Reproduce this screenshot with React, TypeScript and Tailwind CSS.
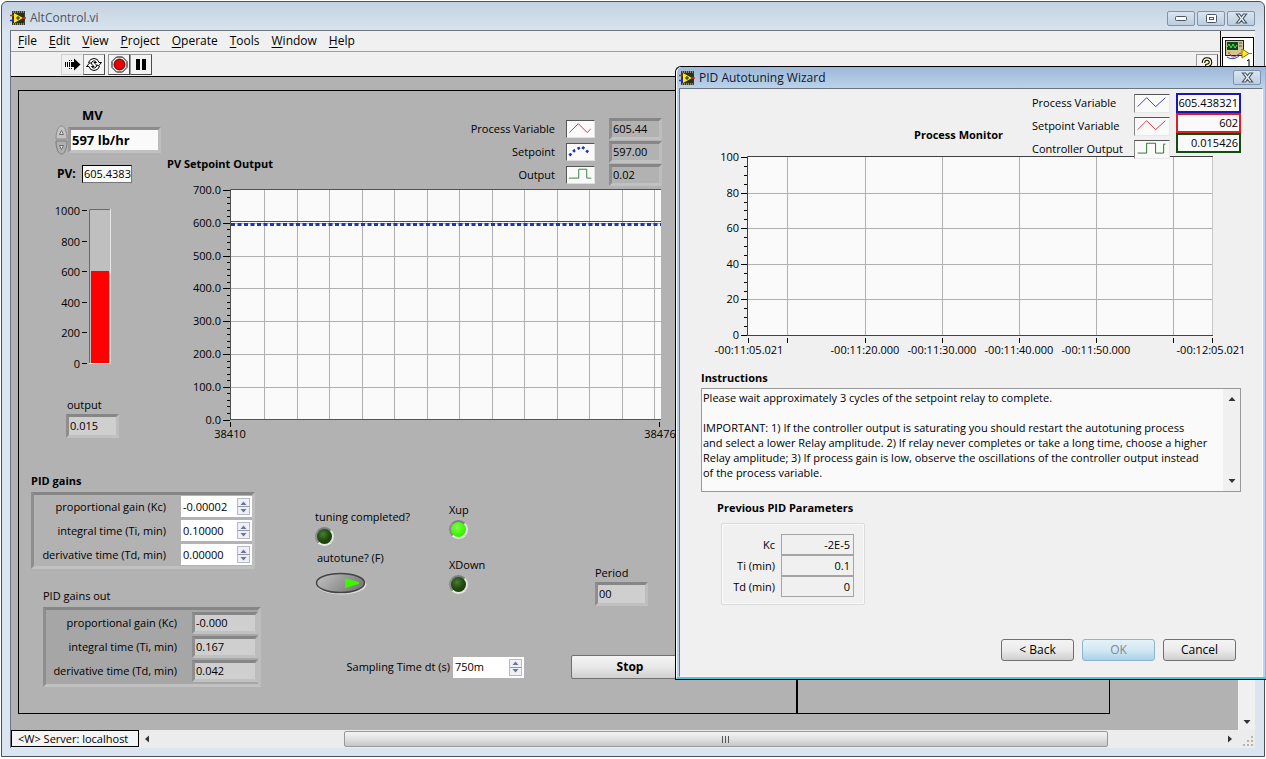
import React, { useState } from 'react';
import { clsx } from 'clsx';

const MENUS = ['File', 'Edit', 'View', 'Project', 'Operate', 'Tools', 'Window', 'Help'];

const INSTRUCTIONS = `Please wait approximately 3 cycles of the setpoint relay to complete.

IMPORTANT: 1) If the controller output is saturating you should restart the autotuning process
and select a lower Relay amplitude. 2) If relay never completes or take a long time, choose a higher
Relay amplitude; 3) If process gain is low, observe the oscillations of the controller output instead
of the process variable.`;

const SUNKEN = 'border-[3px] border-t-[#868686] border-l-[#8e8e8e] border-r-[#bdbdbd] border-b-[#c1c1c1]';

const range = (n: number) => Array.from({ length: n }, (_, i) => i);

const VIIcon = () => (
    <svg width="16" height="16" viewBox="0 0 16 16" className="shrink-0">
        <rect x="2" y="1" width="13" height="14" fill="#3a3a2c" />
        <path d="M3 2h11M3 14h11" stroke="#d8d2a0" strokeWidth="1" strokeDasharray="1 1" />
        <rect x="3" y="3" width="11" height="10" fill="#26331c" />
        <path d="M4 3v10l9-5z" fill="#ffe81a" />
        <path d="M6 8h4M8 6v4" stroke="#222" strokeWidth="1" />
        <path d="M0 5.500h4M12 8h4" stroke="#e02020" strokeWidth="1.500" />
        <path d="M0 10.500h4" stroke="#2030d0" strokeWidth="1.500" />
    </svg>
);

const CrossIcon = () => (
    <svg width="13" height="11" viewBox="0 0 13 11">
        <path d="M1.500 1h3l2 2.500 2-2.500h3l-3.400 4.500 3.400 4.500h-3l-2-2.500-2 2.500h-3l3.400-4.500z" fill="#f4f7fa" stroke="#4a5665" strokeWidth="1.200" />
    </svg>
);

const CaptionButton = ({ label, children }: { label: string; children: React.ReactNode }) => (
    <button
        aria-label={label}
        className="flex h-[15px] w-7 items-center justify-center rounded-[2px] border border-[#7f93aa] bg-linear-to-b from-[#dbe5f0] to-[#bccddf]"
    >
        {children}
    </button>
);

const ToolButton = ({ label, flat, children }: { label: string; flat?: boolean; children: React.ReactNode }) => (
    <button
        aria-label={label}
        className={clsx(
            'flex h-[21px] w-[22px] items-center justify-center border',
            flat
                ? 'border-[#d0d0d0] border-r-transparent bg-[#f0f0f0]'
                : 'border-t-[#9a9a9a] border-l-[#9a9a9a] border-r-[#4c4c4c] border-b-[#4c4c4c] bg-[#f4f4f4]',
        )}
    >
        {children}
    </button>
);

const Led = ({ on, label }: { on?: boolean; label: string }) => (
    <span
        role="img"
        aria-label={label}
        className={clsx(
            'block size-[19px] rounded-full border-2 border-t-[#7e7e7e] border-l-[#8c8c8c] border-r-[#e2e2e2] border-b-[#e8e8e8]',
            on
                ? 'bg-[radial-gradient(circle_at_40%_35%,#7dff4a,#3df500_60%,#2fd000)]'
                : 'bg-[radial-gradient(circle_at_40%_35%,#4a7a3a,#1e4a0c_50%,#123204)]',
        )}
    />
);

const Stepper = ({ label }: { label: string }) => (
    <span className="flex h-[17px] w-[13px] shrink-0 flex-col border border-[#b4bac8] bg-[#eef0f6]">
        <button aria-label={`Increase ${label}`} className="flex flex-1 items-center justify-center border-b border-[#8f96aa]">
            <svg width="7" height="4" viewBox="0 0 7 4"><path d="M0.500 4 3.500 0.500 6.500 4z" fill="#6c7697" /></svg>
        </button>
        <button aria-label={`Decrease ${label}`} className="flex flex-1 items-center justify-center">
            <svg width="7" height="4" viewBox="0 0 7 4"><path d="M0.500 0 3.500 3.500 6.500 0z" fill="#6c7697" /></svg>
        </button>
    </span>
);

const NumberField = ({ id, label, initial }: { id: string; label: string; initial: string }) => {
    const [value, setValue] = useState(initial);

    return (
        <span className="flex h-[21px] w-[71px] items-center bg-white pr-0.5 pl-0.5">
            <input id={id} value={value} onChange={(e) => setValue(e.target.value)} className="min-w-0 flex-1 bg-transparent outline-none" />
            <Stepper label={label} />
        </span>
    );
};

const Readout = ({ id, value, className }: { id?: string; value: string; className: string }) => (
    <output id={id} className={clsx('block truncate px-px', SUNKEN, className)}>
        {value}
    </output>
);

const MvControl = () => {
    const [mv, setMv] = useState('597 lb/hr');

    return (
        <div className="mt-0.5 ml-9 flex items-center">
            <div className="flex w-[13px] flex-col">
                <button aria-label="Increase MV" className="h-[15px]">
                    <svg width="13" height="15" viewBox="0 0 13 15">
                        <path d="M1 14C1 5 4 1 6.500 1S12 5 12 14z" fill="#c4c4c4" stroke="#8a8a8a" />
                        <path d="M4.500 9.500 6.500 5.500 8.500 9.500z" fill="#e4e4e4" stroke="#555" strokeWidth="0.800" />
                    </svg>
                </button>
                <button aria-label="Decrease MV" className="h-[15px]">
                    <svg width="13" height="15" viewBox="0 0 13 15">
                        <path d="M1 1C1 10 4 14 6.500 14S12 10 12 1z" fill="#b0b0b0" stroke="#7a7a7a" />
                        <path d="M4.500 5.500 6.500 9.500 8.500 5.500z" fill="#e4e4e4" stroke="#555" strokeWidth="0.800" />
                    </svg>
                </button>
            </div>
            <input
                id="mv"
                value={mv}
                onChange={(e) => setMv(e.target.value)}
                className="h-[26px] w-[93px] border-[3px] border-t-[#8c8c8c] border-l-[#9a9a9a] border-r-[#bdbdbd] border-b-[#c1c1c1] bg-[#fafafa] px-px text-[13px] font-bold outline-none"
            />
        </div>
    );
};

// Vertical tank, 0 to 1000
const Tank = () => (
    <svg width="66" height="169" viewBox="0 0 66 169" className="ml-[31px] mt-5 block text-[11px]" role="img" aria-label="PV level">
        {range(6).map((i) => (
            <g key={i}>
                <text x="30" y={12 + i * 30.6} textAnchor="end">{1000 - i * 200}</text>
                <path d={`M32 ${Math.round(8 + i * 30.6) - 0.5}h5`} stroke="#000" />
            </g>
        ))}
        <rect x="39.5" y="6.5" width="21" height="154" fill="#bfbfbf" stroke="#e6e6e6" />
        <path d="M39.500 160V6.500H60" stroke="#6a6a6a" fill="none" />
        <rect x="41" y="68" width="18" height="92" fill="#f00" />
    </svg>
);

const TrendChart = () => (
    <svg width="509" height="258" viewBox="0 0 509 258" className="block overflow-visible text-[11px]" role="img" aria-label="PV Setpoint Output chart">
        <rect x="64" y="4" width="430" height="230" fill="#fafafa" />
        {range(13).map((i) => (
            <path key={i} d={`M${Math.round(97 + i * 32.5) + 0.5} 4v229`} stroke="#b0b0b0" />
        ))}
        {range(8).map((i) => (
            <g key={i}>
                <text x="54" y={Math.round(8 + i * 32.800)} textAnchor="end">{`${(7 - i) * 100}.0`}</text>
                <path d={`M56 ${Math.round(4 + i * 32.800) + 0.5}h7`} stroke="#000" />
                {i > 0 && i < 7 && <path d={`M64 ${Math.round(4 + i * 32.800) + 0.5}h430`} stroke="#b0b0b0" />}
                {i < 7 && range(4).map((j) => (
                    <path key={j} d={`M60 ${Math.round(4 + i * 32.800 + (j + 1) * 6.560) + 0.5}h3`} stroke="#000" />
                ))}
            </g>
        ))}
        <path d="M63.500 234V3.500H494" stroke="#505050" fill="none" />
        <path d="M64 35.500h430" stroke="#c4142c" />
        <path d="M64 38.500h430" stroke="#1c37b4" strokeWidth="3" strokeDasharray="4 2.500" />
        <path d="M64 233.500h430" stroke="#1b7a2b" />
        <path d="M63.500 236v5M492.500 236v5" stroke="#000" />
        <text x="63" y="252" textAnchor="middle">38410</text>
        <text x="493" y="252" textAnchor="middle">38476</text>
    </svg>
);

const MonitorChart = () => (
    <svg width="560" height="216" viewBox="0 0 560 216" className="block overflow-visible text-[11px]" role="img" aria-label="Process Monitor chart">
        <rect x="59" y="6" width="465" height="179" fill="#fafafa" />
        {[98, 176, 253, 330, 407, 484].map((x) => (
            <path key={x} d={`M${x + 0.5} 6v178`} stroke="#b0b0b0" />
        ))}
        {range(6).map((i) => (
            <g key={i}>
                <text x="50" y={Math.round(10 + i * 35.600)} textAnchor="end">{100 - i * 20}</text>
                <path d={`M52 ${Math.round(6 + i * 35.600) + 0.5}h6`} stroke="#000" />
                {i > 0 && i < 5 && <path d={`M59 ${Math.round(6 + i * 35.600) + 0.5}h465`} stroke="#b0b0b0" />}
                {i < 5 && range(3).map((j) => (
                    <path key={j} d={`M55 ${Math.round(6 + i * 35.600 + (j + 1) * 8.900) + 0.5}h3`} stroke="#000" />
                ))}
            </g>
        ))}
        <path d="M58.500 185V5.500H524" stroke="#404040" fill="none" />
        <path d="M523.500 6v178" stroke="#c8c8c8" />
        <path d="M59 184.500h465" stroke="#1b5f1b" />
        {[59, 98, 176, 253, 330, 407, 484, 523].map((x) => (
            <path key={x} d={`M${x + 0.5} 187v5`} stroke="#000" />
        ))}
        {[
            [60, '-00:11:05.021'],
            [176, '-00:11:20.000'],
            [253, '-00:11:30.000'],
            [330, '-00:11:40.000'],
            [407, '-00:11:50.000'],
            [522, '-00:12:05.021'],
        ].map(([x, text]) => (
            <text key={text} x={x} y="203" textAnchor="middle">{text}</text>
        ))}
    </svg>
);

const TREND_LEGEND = [
    { label: 'Process Variable', value: '605.44', plot: <path d="M2 13 12 3l10 10 4-4" stroke="#c02434" fill="none" /> },
    { label: 'Setpoint', value: '597.00', plot: <path d="M2 13 8 7l8-4 9 8" stroke="#1c37b4" strokeWidth="3" strokeDasharray="3 3" fill="none" /> },
    { label: 'Output', value: '0.02', plot: <path d="M1.500 12.500h11v-10h9v10h5" stroke="#1b7a2b" fill="none" /> },
];

const MONITOR_LEGEND = [
    { label: 'Process Variable', value: '605.438321', box: 'border-[#1818b4]', plot: <path d="M2 13 12 3l10 10L33 3" stroke="#2a2ac8" fill="none" /> },
    { label: 'Setpoint Variable', value: '602', box: 'border-[#d82028]', plot: <path d="M2 13 12 3l10 10L33 3" stroke="#d82838" fill="none" /> },
    { label: 'Controller Output', value: '0.015426', box: 'border-[#104e10]', plot: <path d="M2 13.500h10v-11h10v11h9v-10h2" stroke="#1b6a1b" fill="none" /> },
];

const GAINS = [
    { id: 'kc', label: 'proportional gain (Kc)', value: '-0.00002', out: '-0.000' },
    { id: 'ti', label: 'integral time (Ti, min)', value: '0.10000', out: '0.167' },
    { id: 'td', label: 'derivative time (Td, min)', value: '0.00000', out: '0.042' },
];

const FrontPanel = () => {
    const [autotune, setAutotune] = useState(true);

    return (
        <div className="flex min-h-0 flex-1 bg-[#b2b2b2] pt-[13px] pr-32 pb-4 pl-[7px]">
            <section className="flex min-w-0 flex-[5_1_0%] flex-col border border-black">
                <div className="flex pt-4">
                    <div className="w-[148px] shrink-0">
                        <label htmlFor="mv" className="ml-[63px] block text-[13px] leading-4 font-bold">MV</label>
                        <MvControl />
                        <div className="mt-2.5 ml-[38px] flex h-[18px] items-center">
                            <label htmlFor="pv" className="w-[25px] text-xs font-bold">PV:</label>
                            <output id="pv" className="block h-[18px] w-[50px] border border-t-black border-l-black border-r-[#777] border-b-[#777] bg-[#fafafa] px-px leading-4">
                                605.4383
                            </output>
                        </div>
                        <Tank />
                        <label htmlFor="output" className="mt-[25px] ml-12 block">output</label>
                        <Readout id="output" value="0.015" className="mt-px ml-[47px] h-6 w-[53px] bg-[#cfcfcf] leading-[18px]" />
                    </div>
                    <div className="w-[509px] shrink-0">
                        <div className="mt-2.5 flex w-[495px] items-end justify-between">
                            <h2 className="pb-3.5 font-bold">PV Setpoint Output</h2>
                            <div>
                                {TREND_LEGEND.map((row) => (
                                    <div key={row.label} className="flex h-[23px] items-center justify-end">
                                        <span>{row.label}</span>
                                        <svg width="29" height="18" viewBox="0 0 29 18" className="mr-3.5 ml-[11px] border border-[#e0e0e0] border-t-[#555] border-l-[#555] bg-[#fafafa]">
                                            {row.plot}
                                        </svg>
                                        <Readout value={row.value} className="h-[22px] w-[53px] leading-4" />
                                    </div>
                                ))}
                            </div>
                        </div>
                        <TrendChart />
                    </div>
                </div>

                <div className="flex">
                    <div className="w-[296px] shrink-0 pt-[29px] pl-3">
                        <h2 className="font-bold">PID gains</h2>
                        <div className={clsx('mt-[3px] flex w-[224px] flex-col gap-[3px] py-px', SUNKEN)}>
                            {GAINS.map((g) => (
                                <div key={g.id} className="flex items-center justify-end">
                                    <label htmlFor={g.id} className="mr-[15px]">{g.label}</label>
                                    <NumberField id={g.id} label={g.label} initial={g.value} />
                                </div>
                            ))}
                        </div>
                        <h2 className="mt-[19px] pl-3">PID gains out</h2>
                        <div className={clsx('mt-[3px] ml-3 flex w-[218px] flex-col gap-0.5 bg-[#a6a6a6] py-0.5', SUNKEN)}>
                            {GAINS.map((g) => (
                                <div key={g.id} className="flex items-center justify-end">
                                    <label htmlFor={`${g.id}-out`} className="mr-[15px]">{g.label}</label>
                                    <Readout id={`${g.id}-out`} value={g.out} className="h-[22px] w-[66px] bg-[#cfcfcf] leading-4" />
                                </div>
                            ))}
                        </div>
                    </div>

                    <div className="min-w-0 flex-1">
                        <div className="flex">
                            <div className="w-[134px] shrink-0 pt-[65px]">
                                <p>tuning completed?</p>
                                <div className="pt-0.5"><Led label="tuning completed?" /></div>
                                <p className="mt-1 pl-0.5">autotune? (F)</p>
                                <button
                                    aria-label="autotune? (F)"
                                    aria-pressed={autotune}
                                    onClick={() => setAutotune(!autotune)}
                                    className="mt-1.5 block"
                                >
                                    <svg width="52" height="23" viewBox="0 0 52 23">
                                        <defs>
                                            <linearGradient id="knob" x1="0" x2="1" y1="0" y2="0.400">
                                                <stop offset="0" stopColor="#c4c4c4" />
                                                <stop offset="1" stopColor="#7c7c7c" />
                                            </linearGradient>
                                        </defs>
                                        <ellipse cx="26.500" cy="12.500" rx="25" ry="10" fill="#dcdcdc" />
                                        <ellipse cx="25.500" cy="11" rx="24" ry="9.500" fill="url(#knob)" stroke="#444" strokeWidth="1.500" />
                                        <path d="M30 6v10l14-4v-2z" fill={autotune ? '#3df500' : '#1e4a0c'} />
                                    </svg>
                                </button>
                            </div>
                            <div className="w-[146px] shrink-0 pt-[58px]">
                                <p>Xup</p>
                                <div className="pt-0.5"><Led on label="Xup" /></div>
                                <p className="mt-[18px]">XDown</p>
                                <div className="pt-0.5"><Led label="XDown" /></div>
                            </div>
                            <div className="pt-[121px]">
                                <label htmlFor="period" className="block">Period</label>
                                <Readout id="period" value="00" className="mt-px h-6 w-[53px] bg-[#cfcfcf] leading-[18px]" />
                            </div>
                        </div>
                        <div className="mt-[49px] flex items-center">
                            <label htmlFor="dt" className="w-[135px] text-right">Sampling Time dt (s)</label>
                            <div className="ml-[3px] w-[118px] shrink-0"><NumberField id="dt" label="sampling time" initial="750m" /></div>
                            <button className="h-6 w-[118px] rounded-[2px] border border-[#707070] bg-linear-to-b from-[#f4f4f4] via-[#e8e8e8] to-[#cfcfcf] text-xs font-bold">
                                Stop
                            </button>
                        </div>
                    </div>
                </div>
            </section>
            <section className="flex-[2_1_0%] border border-black" />
        </div>
    );
};

const Arrow = ({ d }: { d: string }) => (
    <svg width="8" height="8" viewBox="0 0 8 8"><path d={d} fill="#333" /></svg>
);

const HorizontalScroll = () => (
    <div className="flex h-[18px] shrink-0 bg-[#ececec]">
        <div className="flex h-[17px] w-32 shrink-0 items-center border border-black bg-[#f4f4f4] pl-1.5 whitespace-nowrap">&lt;W&gt; Server: localhost</div>
        <button aria-label="Scroll left" className="flex w-[205px] items-center pl-1"><Arrow d="M6 0.500v7L2 4z" /></button>
        <div className="mt-px flex h-4 flex-1 items-center justify-center rounded-[2px] border border-[#979797] bg-linear-to-b from-[#f3f3f3] via-[#e0e0e0] to-[#c6c6c6]">
            <svg width="8" height="7" viewBox="0 0 8 7"><path d="M0.500 0v7M3.500 0v7M6.500 0v7" stroke="#555" /></svg>
        </div>
        <button aria-label="Scroll right" className="flex w-[130px] items-center justify-end pr-1"><Arrow d="M2 0.500v7L6 4z" /></button>
        <div className="flex w-[17px] items-end justify-end p-0.5">
            <svg width="10" height="10" viewBox="0 0 10 10" fill="#b5b5ac">
                <path d="M8 0h2v2H8zM4 4h2v2H4zM8 4h2v2H8zM0 8h2v2H0zM4 8h2v2H4zM8 8h2v2H8z" />
            </svg>
        </div>
    </div>
);

const WizardButton = ({ children, disabled }: { children: React.ReactNode; disabled?: boolean }) => (
    <button
        disabled={disabled}
        className={clsx(
            'h-[22px] w-[73px] rounded-[3px] border bg-linear-to-b text-xs leading-4',
            disabled
                ? 'border-[#8eb4c8] from-[#e4f2f9] via-[#d2e8f3] to-[#a8d3e8] text-[#7f8a90]'
                : 'border-[#707070] from-[#f4f4f4] via-[#ebebeb] to-[#cfcfcf] text-black',
        )}
    >
        {children}
    </button>
);

const AutotuningWizard = () => (
    <div
        role="dialog"
        aria-label="PID Autotuning Wizard"
        className="absolute top-[66px] right-0 flex h-[614px] w-[591px] flex-col rounded-tl-md border-t border-b border-l border-black bg-[#b9d1ea]"
    >
        <div className="flex min-h-0 flex-1 flex-col rounded-tl-md border-b-2 border-l border-r border-b-[#4fc3d9] border-l-white border-r-[#5fc9e6] bg-linear-to-b from-[#9db8d8] to-[#bdd3ea] to-[22px] pr-0.5 pl-0.5">
            <header className="flex h-[21px] shrink-0 items-center pr-0.5">
                <VIIcon />
                <h1 className="ml-1 flex-1 text-xs text-[#101828]">PID Autotuning Wizard</h1>
                <CaptionButton label="Close wizard"><CrossIcon /></CaptionButton>
            </header>
            <div className="flex min-h-0 flex-1 flex-col border border-t-[#6d7580] border-l-[#6d7580] border-r-[#f8f8f8] border-b-[#f8f8f8] bg-[#f0f0f0] pr-[21px] pl-[9px]">
                <div className="flex h-[62px] items-start justify-end pt-[3px]">
                    <h2 className="mr-[29px] pt-[35px] font-bold">Process Monitor</h2>
                    <div className="w-[102px]">
                        {MONITOR_LEGEND.map((row) => (
                            <p key={row.label} className="h-[23px] pt-[3px]">{row.label}</p>
                        ))}
                    </div>
                    <div className="z-10 mr-1.5 flex flex-col gap-1 pt-0.5">
                        {MONITOR_LEGEND.map((row) => (
                            <svg key={row.label} width="36" height="19" viewBox="0 0 36 19" className="border border-[#e8e8e8] border-t-[#555] border-l-[#888] bg-[#fafafa]">
                                {row.plot}
                            </svg>
                        ))}
                    </div>
                    <div className="flex flex-col pt-px">
                        {MONITOR_LEGEND.map((row) => (
                            <output key={row.label} className={clsx('flex h-5 w-[65px] items-center justify-end border-2 bg-[#fafafa] pr-px', row.box)}>
                                {row.value}
                            </output>
                        ))}
                    </div>
                </div>
                <MonitorChart />
                <div className="pl-3">
                    <label htmlFor="instructions" className="mt-[3px] block font-bold">Instructions</label>
                    <div className="mt-0.5 flex h-[104px] border border-[#999] bg-[#fafafa]">
                        <textarea
                            id="instructions"
                            readOnly
                            defaultValue={INSTRUCTIONS}
                            className="block min-w-0 flex-1 resize-none overflow-hidden py-px pl-px leading-[15px] whitespace-pre outline-none"
                        />
                        <div className="flex w-[17px] flex-col items-center justify-between bg-[#f0f0f0] py-1.5">
                            <button aria-label="Scroll up"><Arrow d="M0.500 6h7L4 2z" /></button>
                            <button aria-label="Scroll down"><Arrow d="M0.500 2h7L4 6z" /></button>
                        </div>
                    </div>
                    <h2 className="mt-2 pl-4 font-bold">Previous PID Parameters</h2>
                    <div className="mt-[7px] ml-5 w-36 rounded-[2px] border border-[#dcdcdc] pt-2.5 pr-2.5 pb-[7px] shadow-[inset_0_0_0_1px_#fafafa]">
                        {[['Kc', '-2E-5'], ['Ti (min)', '0.1'], ['Td (min)', '0']].map(([label, value]) => (
                            <div key={label} className="flex items-center justify-end">
                                <label htmlFor={`prev-${label}`} className="mr-1.5">{label}</label>
                                <output id={`prev-${label}`} className="block h-[21px] w-[73px] border border-[#a5a5a5] pr-[3px] text-right leading-5">
                                    {value}
                                </output>
                            </div>
                        ))}
                    </div>
                </div>
                <div className="mt-auto flex justify-end gap-2 pr-[5px] pb-[15px]">
                    <WizardButton>&lt; Back</WizardButton>
                    <WizardButton disabled>OK</WizardButton>
                    <WizardButton>Cancel</WizardButton>
                </div>
            </div>
        </div>
    </div>
);

export default function App() {
    return (
        <main className="relative flex h-screen min-h-[759px] w-full flex-col overflow-hidden bg-white p-px font-['Open_Sans',sans-serif] text-[11px] leading-4 text-black">
            <div className="mb-px flex min-h-0 flex-1 flex-col rounded-t-md border border-[#46525e] bg-linear-to-b from-[#c3d2e1] to-[#dbe5f0] to-[32px] pr-[9px] pb-2 pl-2">
                <header className="flex h-7 shrink-0 items-center gap-0.5 pt-1">
                    <VIIcon />
                    <h1 className="ml-0.5 flex-1 text-xs text-[#4c5560]">AltControl.vi</h1>
                    <CaptionButton label="Minimize">
                        <svg width="12" height="5" viewBox="0 0 12 5"><rect x="0.500" y="0.500" width="11" height="4" rx="1" fill="#fff" stroke="#4a5665" /></svg>
                    </CaptionButton>
                    <CaptionButton label="Maximize">
                        <svg width="11" height="9" viewBox="0 0 11 9">
                            <rect x="0.500" y="0.500" width="10" height="8" rx="1" fill="#fff" stroke="#4a5665" />
                            <rect x="3.500" y="3.500" width="4" height="2" fill="none" stroke="#4a5665" />
                        </svg>
                    </CaptionButton>
                    <CaptionButton label="Close"><CrossIcon /></CaptionButton>
                </header>

                <div className="flex min-h-0 flex-1 flex-col border-t border-l border-[#6d7580]">
                    <div className="flex h-[46px] shrink-0 border-b border-black bg-[#f0f0f0]">
                        <div className="flex min-w-0 flex-1 flex-col">
                            <nav className="flex h-[21px] items-center gap-3 border-b border-[#a0a0a0] pl-[7px] text-xs">
                                {MENUS.map((m) => (
                                    <button key={m}><span className="underline underline-offset-2">{m[0]}</span>{m.slice(1)}</button>
                                ))}
                            </nav>
                            <div className="flex items-center pt-0.5 pr-0.5 pl-[50px]">
                                <ToolButton label="Running" flat>
                                    <svg width="17" height="13" viewBox="0 0 17 13">
                                        <path d="M1.500 4v5M3.500 4v5M5.500 4v5" stroke="#000" />
                                        <path d="M7 4h3V0.500l6.500 6-6.500 6V9H7z" fill="#000" />
                                        <path d="M5 2.500h4M5 10.500h4" stroke="#000" strokeDasharray="1 1" />
                                    </svg>
                                </ToolButton>
                                <ToolButton label="Run continuously">
                                    <svg width="18" height="15" viewBox="0 0 18 15" fill="#fff" stroke="#000" strokeLinejoin="round">
                                        <path d="M3.500 5.500Q5 1.500 9 1.500q4 0 5 4h2.500L13 9.500 9 5.500h2.500Q10.500 3.500 8.500 4T6 7z" />
                                        <path d="M14.500 9.500Q13 13.500 9 13.500q-4 0-5-4H1.500L5 5.500l4 4H6.500q1 2 3 1.500T12 8z" />
                                    </svg>
                                </ToolButton>
                                <span className="w-[3px]" />
                                <ToolButton label="Abort">
                                    <svg width="17" height="17" viewBox="0 0 17 17">
                                        <path d="M5.500 1h6L16 5.500v6L11.500 16h-6L1 11.500v-6z" fill="#fff" stroke="#000" />
                                        <circle cx="8.500" cy="8.500" r="5.500" fill="#e80000" stroke="#500" />
                                    </svg>
                                </ToolButton>
                                <ToolButton label="Pause">
                                    <svg width="10" height="11" viewBox="0 0 10 11"><path d="M0 0h4v11H0zM6 0h4v11H6z" fill="#000" /></svg>
                                </ToolButton>
                                <span className="flex-1" />
                                <ToolButton label="Help">
                                    <svg width="12" height="15" viewBox="0 0 12 15" fill="none">
                                        <path d="M2.500 6Q2.500 2 6 2t3.500 3.500Q9.500 8 6 8.500V11" stroke="#000" strokeWidth="3.500" />
                                        <path d="M2.500 6Q2.500 2 6 2t3.500 3.500Q9.500 8 6 8.500V11" stroke="#ffffb0" strokeWidth="1.500" />
                                    </svg>
                                </ToolButton>
                            </div>
                        </div>
                        <div className="w-[35px] border-l border-black pt-1.5 pl-px">
                            <svg width="32" height="32" viewBox="0 0 32 32" role="img" aria-label="VI icon">
                                <rect x="0.500" y="0.500" width="31" height="31" fill="#fff" stroke="#000" />
                                <rect x="3.500" y="3.500" width="18" height="15" fill="#cfc596" stroke="#222" />
                                <rect x="5" y="5" width="11" height="8" fill="#0c4a12" />
                                <path d="M5 10l2-3 2 4 2-4 2 4 2-3" stroke="#4fe05a" fill="none" />
                                <path d="M17 6h3M17 9h3M6 16h2" stroke="#555" />
                                <path d="M8 17q2 5 6 2t5-3" stroke="#c03040" fill="none" />
                                <path d="M5 20q6 4 12-1" stroke="#2848c0" fill="none" />
                                <path d="M20 12v9l7-4.500z" fill="#ffee22" stroke="#907000" />
                                <path d="M27 16.500h3" stroke="#d06020" />
                                <path d="M25 24l2-1.500V29" stroke="#000" fill="none" />
                            </svg>
                        </div>
                    </div>
                    <div className="flex min-h-0 flex-1">
                        <FrontPanel />
                        <div className="flex w-[17px] shrink-0 items-end justify-center bg-[#f0f0f0] pb-1">
                            <button aria-label="Scroll down"><Arrow d="M0.500 2h7L4 6z" /></button>
                        </div>
                    </div>
                    <HorizontalScroll />
                </div>
            </div>
            <AutotuningWizard />
        </main>
    );
}
